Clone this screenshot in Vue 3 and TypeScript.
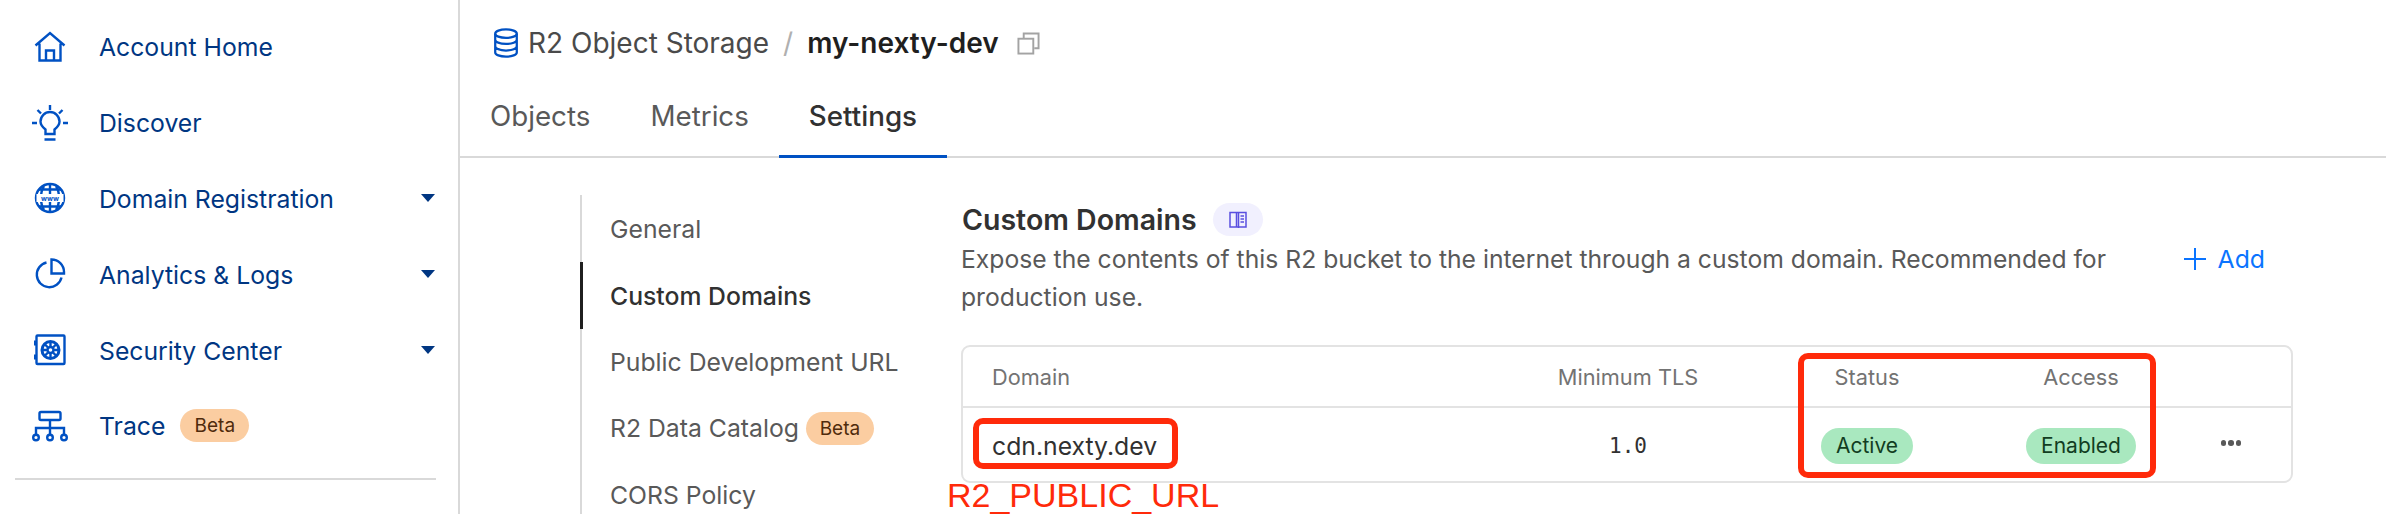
<script setup lang="ts">
const sideItems = [
  { label: "Account Home", icon: "home" },
  { label: "Discover", icon: "bulb" },
  { label: "Domain Registration", icon: "globe", caret: true },
  { label: "Analytics & Logs", icon: "pie", caret: true },
  { label: "Security Center", icon: "safe", caret: true },
  { label: "Trace", icon: "trace", beta: true },
];
const tabs = ["Objects", "Metrics", "Settings"];
const subNav = [
  { label: "General" },
  { label: "Custom Domains", active: true },
  { label: "Public Development URL" },
  { label: "R2 Data Catalog", beta: true },
  { label: "CORS Policy" },
];
</script>

<template>
  <div class="page">
    <aside class="sidebar">
      <ul class="side-list">
        <li v-for="item in sideItems" :key="item.label" class="side-item">
          <span class="side-icon">
            <svg v-if="item.icon === 'home'" viewBox="0 0 32 32" class="ic">
              <path d="M1.500 14.500 16 2 30.500 14.500M5.500 12.500V29.500h21V12.500M12 29.500V19.500h8v10" />
            </svg>
            <svg v-else-if="item.icon === 'bulb'" viewBox="0 0 36 36" class="ic ic-wide">
              <path d="M18 0v5M5.500 5 9 8.500M30.500 5 27 8.500M0 18h5M31 18h5M13.500 29v-4.500C11 22.500 8.500 20.500 8.500 16.500a9.500 9.500 0 0 1 19 0c0 4-2.500 6-5 8V29ZM12.500 34.500h11" />
            </svg>
            <svg v-else-if="item.icon === 'globe'" viewBox="0 0 32 32" class="ic">
              <circle cx="16" cy="16" r="14" />
              <path d="M16 2v28M10 28c-4-6-4-18 0-24M22 28c4-6 4-18 0-24M5 7.500h22M5 24.500h22" />
              <rect x="2.500" y="12" width="27" height="8" class="globe-band" />
              <text x="16" y="18.500" text-anchor="middle" class="globe-text">www</text>
            </svg>
            <svg v-else-if="item.icon === 'pie'" viewBox="0 0 32 32" class="ic">
              <path d="M12.500 4.500A12.500 12.500 0 1 0 27.500 19.500" />
              <path d="M17.500 1.500a12.500 12.500 0 0 1 12.500 12.500v1.500H17.500Z" />
            </svg>
            <svg v-else-if="item.icon === 'safe'" viewBox="0 0 32 32" class="ic">
              <rect x="2.500" y="1.500" width="28" height="28.500" rx="1" />
              <circle cx="16.500" cy="16" r="8.500" class="wheel" />
              <circle cx="16.500" cy="16" r="3" />
              <path d="M16.500 7.500v5M16.500 19.500v5M8 16h5M20 16h5M10.500 10l3.500 3.500M19 18.500l3.500 3.500M22.500 10 19 13.500M14 18.500 10.500 22M1 6.500v5M1 20.500v5" />
            </svg>
            <svg v-else viewBox="0 0 36 31" class="ic ic-wide">
              <rect x="7.500" y="1.500" width="21" height="8" rx="1.500" />
              <path d="M18 9.500v15M4 24v-6.500h28V24" />
              <circle cx="4" cy="27" r="2.800" />
              <circle cx="18" cy="27" r="2.800" />
              <circle cx="32" cy="27" r="2.800" />
            </svg>
          </span>
          <span class="side-label">{{ item.label }}</span>
          <span v-if="item.beta" class="beta side-beta">Beta</span>
          <span v-if="item.caret" class="caret"></span>
        </li>
      </ul>
      <div class="side-rule"></div>
    </aside>

    <main class="content">
      <header class="crumbs">
        <svg class="db-icon" viewBox="0 0 26 32">
          <ellipse cx="13" cy="6" rx="11.500" ry="4.500" />
          <path d="M1.500 6v20c0 2.500 5 4.500 11.500 4.500s11.500-2 11.500-4.500V6M1.500 12.500c0 2.500 5 4.500 11.500 4.500s11.500-2 11.500-4.500M1.500 19.500c0 2.500 5 4.500 11.500 4.500s11.500-2 11.500-4.500M4.500 15.500h1.500M4.500 22.500h1.500" />
        </svg>
        <span class="crumb">R2 Object Storage</span>
        <span class="slash">/</span>
        <span class="bucket">my-nexty-dev</span>
        <svg class="copy-icon" viewBox="0 0 24 24">
          <path d="M7 6.500V1.500h15.500V17H18" />
          <rect x="1.500" y="7" width="15.500" height="15.500" />
        </svg>
      </header>

      <nav class="tabs">
        <a v-for="tab in tabs" :key="tab" class="tab" :class="{ active: tab === 'Settings' }">{{ tab }}</a>
      </nav>

      <div class="settings">
        <ul class="subnav">
          <li v-for="item in subNav" :key="item.label" class="subnav-item" :class="{ active: item.active }">
            {{ item.label }}
            <span v-if="item.beta" class="beta sub-beta">Beta</span>
          </li>
        </ul>

        <section class="panel">
          <div class="title-row">
            <h2>Custom Domains</h2>
            <span class="doc-badge">
              <svg viewBox="0 0 18 18">
                <path d="M1 1.500h16v14.500H1ZM7.500 1.500v14.500M9.500 1v16M11.500 5H15M11.500 8H15M11.500 11H15" />
              </svg>
            </span>
          </div>
          <div class="desc-row">
            <p>Expose the contents of this R2 bucket to the internet through a custom domain. Recommended for production use.</p>
            <a class="add">
              <svg viewBox="0 0 22 22"><path d="M11 0v22M0 11h22" /></svg>
              Add
            </a>
          </div>

          <div class="table">
            <div class="row head">
              <div class="col-domain">Domain</div>
              <div class="col-tls">Minimum TLS</div>
              <div class="col-status">Status</div>
              <div class="col-access">Access</div>
              <div class="col-more"></div>
            </div>
            <div class="row body">
              <div class="col-domain name">cdn.nexty.dev</div>
              <div class="col-tls mono">1.0</div>
              <div class="col-status"><span class="pill">Active</span></div>
              <div class="col-access"><span class="pill">Enabled</span></div>
              <div class="col-more dots"><i></i><i></i><i></i></div>
            </div>
          </div>
        </section>
      </div>
    </main>

    <!-- red annotations drawn over the screenshot -->
    <div class="mark mark-domain"></div>
    <div class="mark mark-status"></div>
    <div class="mark-text">R2_PUBLIC_URL</div>
  </div>
</template>

<style scoped>
.page {
  position: relative;
  display: flex;
  width: 2386px;
  height: 514px;
  overflow: hidden;
  background: #fff;
  font-family: Inter, "Liberation Sans", sans-serif;
  color: #4a4a4a;
}

ul {
  list-style: none;
  margin: 0;
  padding: 0;
}

/* Sidebar */
.sidebar {
  flex: 0 0 460px;
  box-sizing: border-box;
  border-right: 2px solid #d9d9d9;
  padding: 9px 22px 0 15px;
}
.side-item {
  display: flex;
  align-items: center;
  height: 75.800px;
  color: #003682;
  font-size: 24.750px;
}
.side-label {
  padding-top: 1px;
}
.side-icon {
  flex: 0 0 70px;
  display: flex;
  justify-content: center;
  margin-right: 14px;
}
.ic {
  width: 32px;
  height: 32px;
  fill: none;
  stroke: #0051c3;
  stroke-width: 2.400;
}
.ic-wide {
  width: 36px;
  height: 36px;
}
.globe-band {
  fill: #fff;
  stroke: none;
}
.globe-text {
  fill: #0051c3;
  stroke: none;
  font-size: 7px;
  font-weight: 700;
}
.wheel {
  stroke-width: 3;
}
.caret {
  margin-left: auto;
  margin-right: 1px;
  border-left: 7.500px solid transparent;
  border-right: 7.500px solid transparent;
  border-top: 8px solid #003682;
}
.side-rule {
  height: 2px;
  margin-top: 14px;
  background: #d9d9d9;
}
.beta {
  display: inline-flex;
  align-items: center;
  justify-content: center;
  border-radius: 17px;
  background: #fbcda1;
  color: #4f2b0c;
  font-size: 19px;
}
.side-beta {
  width: 69px;
  height: 33px;
  margin-left: 15px;
}

/* Main */
.content {
  flex: 1;
  min-width: 0;
}
.crumbs {
  display: flex;
  align-items: center;
  height: 86px;
  padding-left: 33px;
  font-size: 28px;
}
.db-icon {
  width: 26px;
  height: 30px;
  margin-right: 9px;
  fill: none;
  stroke: #0051c3;
  stroke-width: 2.400;
}
.crumb {
  color: #4a4a4a;
}
.slash {
  margin: 0 14px;
  color: #b0b0b0;
  font-size: 28px;
}
.bucket {
  color: #1f1f1f;
  font-weight: 600;
}
.copy-icon {
  width: 23px;
  height: 23px;
  margin-left: 18px;
  fill: #fff;
  stroke: #a3a3a3;
  stroke-width: 2;
}
.tabs {
  display: flex;
  height: 72px;
  box-sizing: border-box;
  border-bottom: 2px solid #d9d9d9;
}
.tab {
  display: flex;
  align-items: center;
  padding: 0 30px 12px;
  height: 72px;
  box-sizing: border-box;
  font-size: 27.750px;
  color: #595959;
}
.tab.active {
  color: #313131;
  font-weight: 500;
  border-bottom: 3px solid #0051c3;
  padding-bottom: 9px;
}
.settings {
  display: flex;
  padding: 37px 93px 0 120px;
}
.subnav {
  flex: 0 0 381px;
  box-sizing: border-box;
  padding-top: 1px;
  border-left: 2px solid #d9d9d9;
}
.subnav-item {
  display: flex;
  align-items: center;
  height: 66.400px;
  padding-left: 30px;
  margin-left: -2px;
  font-size: 24.750px;
  color: #595959;
  white-space: nowrap;
}
.subnav-item.active {
  color: #313131;
  font-weight: 500;
  border-left: 3px solid #1f1f1f;
  padding-left: 27px;
}
.sub-beta {
  width: 68px;
  height: 33px;
  margin-left: 7px;
}
.panel {
  flex: 1;
  min-width: 0;
}
.title-row {
  display: flex;
  align-items: center;
  height: 33px;
  margin-top: 8px;
  padding-left: 1px;
}
h2 {
  margin: 0;
  font-size: 28.500px;
  font-weight: 600;
  color: #313131;
}
.doc-badge {
  display: flex;
  align-items: center;
  justify-content: center;
  width: 50px;
  height: 33px;
  margin-left: 16px;
  border-radius: 17px;
  background: #f1f0fe;
}
.doc-badge svg {
  width: 18px;
  height: 18px;
  fill: none;
  stroke: #5a4fe0;
  stroke-width: 1.500;
}
.desc-row {
  display: flex;
  justify-content: space-between;
  margin-top: 4px;
}
.desc-row p {
  width: 1170px;
  margin: 0;
  font-size: 24.700px;
  line-height: 38px;
  color: #595959;
}
.add {
  display: flex;
  align-items: center;
  align-self: flex-start;
  height: 38px;
  margin-right: 28px;
  font-size: 24.750px;
  color: #0a74ff;
}
.add svg {
  width: 22px;
  height: 22px;
  margin-right: 12px;
  fill: none;
  stroke: #0a74ff;
  stroke-width: 2;
}
.table {
  margin-top: 29px;
  border: 2px solid #e3e3e3;
  border-radius: 9px;
}
.row {
  display: flex;
  align-items: center;
  text-align: center;
}
.row.head {
  box-sizing: border-box;
  height: 61px;
  border-bottom: 2px solid #e3e3e3;
  font-size: 21.750px;
  color: #737373;
}
.row.body {
  box-sizing: border-box;
  height: 73px;
  padding-top: 3px;
  font-size: 24.750px;
  color: #313131;
}
.col-domain {
  flex: 0 0 550px;
  box-sizing: border-box;
  padding-left: 29px;
  text-align: left;
}
.col-tls {
  flex: 0 0 230px;
}
.col-status {
  flex: 0 0 248px;
}
.col-access {
  flex: 0 0 180px;
}
.col-more {
  flex: 1;
}
.mono {
  font-family: "DejaVu Sans Mono", monospace;
  font-size: 21px;
}
.pill {
  display: inline-block;
  padding: 0 15px;
  height: 36px;
  line-height: 36px;
  border-radius: 18px;
  background: #a9e8bf;
  color: #123d22;
  font-size: 21px;
}
.dots {
  display: flex;
  justify-content: center;
  gap: 2px;
  padding-bottom: 6px;
}
.dots i {
  width: 5.500px;
  height: 5.500px;
  border-radius: 50%;
  background: #595959;
}

/* Annotations */
.mark {
  position: absolute;
  box-sizing: border-box;
  border: 6px solid #ff2a0a;
  border-radius: 10px;
}
.mark-domain {
  left: 973px;
  top: 418px;
  width: 205px;
  height: 51px;
}
.mark-status {
  left: 1798px;
  top: 353px;
  width: 358px;
  height: 125px;
}
.mark-text {
  position: absolute;
  left: 947px;
  top: 475px;
  font-family: "Liberation Sans", sans-serif;
  font-size: 34px;
  line-height: 40px;
  color: #ff2a0a;
}
</style>
